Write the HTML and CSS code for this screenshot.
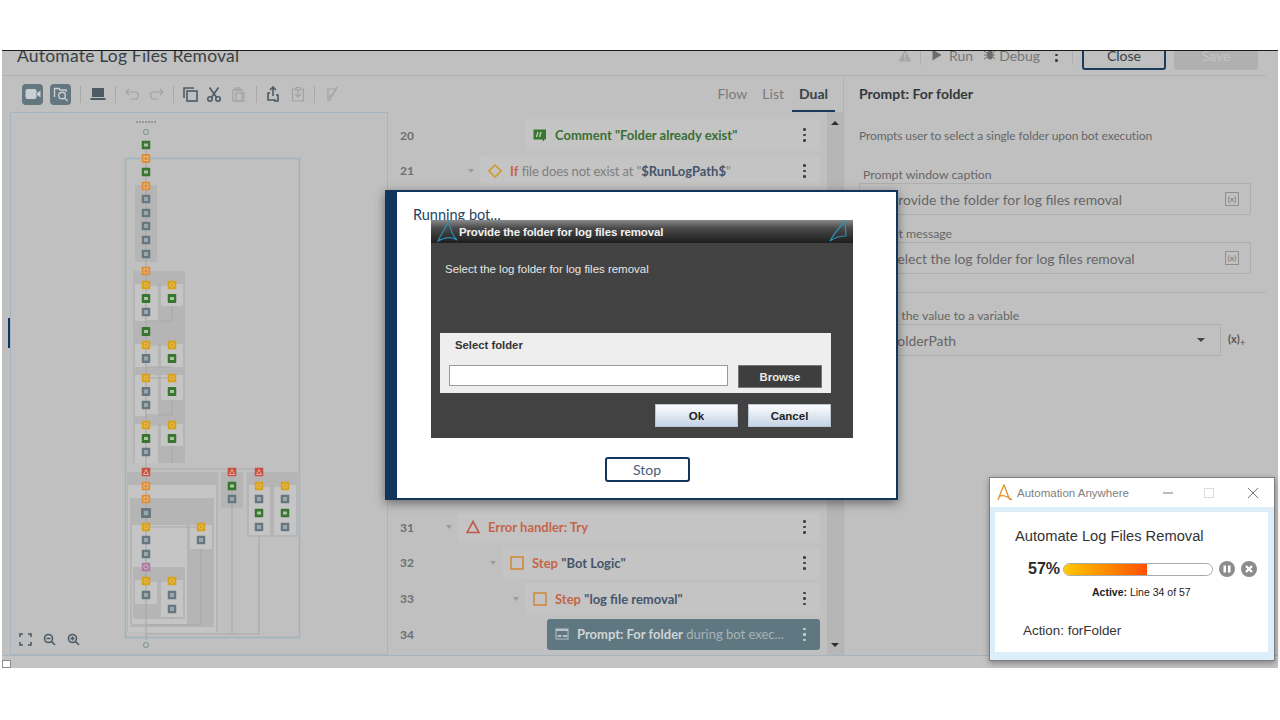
FILE: index.html
```html
<!DOCTYPE html>
<html lang="en">
<head>
<meta charset="utf-8">
<title>Automate Log Files Removal</title>
<link rel="stylesheet" href="styles.css">
</head>
<body>
<div class="screen">
  <header class="head">
    <div class="head-inner">
      <h1 class="title">Automate Log Files Removal</h1>
      <div class="head-actions">
        <svg class="ic-warn" width="14" height="13" viewBox="0 0 14 13"><path d="M7 0.5 13.5 12.5H0.5Z" class="f-mid"/><rect x="6.3" y="4" width="1.4" height="5" class="f-bg"/><rect x="6.3" y="10" width="1.4" height="1.4" class="f-bg"/></svg>
        <span class="vsep"></span>
        <svg width="10" height="12" viewBox="0 0 10 12"><path d="M0.5 0.5 9.5 6 0.5 11.5Z" class="f-dim"/></svg>
        <span class="act run">Run</span>
        <svg class="ic-bug" width="13" height="12" viewBox="0 0 13 12"><ellipse cx="7" cy="6" rx="3" ry="4.5" class="f-dim"/><path d="M1 2 4 4M1 6H4M1 10 4 8M12 2 10 4M12 6H10M12 10 10 8" class="s-dim"/></svg>
        <span class="act">Debug</span>
        <span class="kebab head-kebab"><i></i><i></i></span>
        <span class="vsep sep2"></span>
        <button class="btn-close">Close</button>
        <button class="btn-save">Save</button>
      </div>
    </div>
  </header>

  <div class="main">
    <section class="editor">
      <div class="toolbar">
        <span class="tool-btn"><svg width="16" height="12" viewBox="0 0 16 12"><rect x="0.5" y="1" width="11" height="10" rx="2" class="f-bg2"/><path d="M12 5 15.5 2.5V9.5L12 7Z" class="f-bg2"/></svg></span>
        <span class="tool-btn"><svg width="16" height="16" viewBox="0 0 16 16"><path d="M1.5 11V2.5H6L7 4H13V6" class="s-bg2"/><circle cx="9" cy="9.5" r="3.3" class="s-bg2"/><path d="M11.5 12 14.5 15" class="s-bg2"/></svg></span>
        <span class="tsep"></span>
        <svg class="tool" width="16" height="14" viewBox="0 0 16 14"><rect x="2" y="1" width="12" height="9" class="f-ink"/><rect x="0.5" y="11" width="15" height="2" class="f-ink"/></svg>
        <span class="tsep"></span>
        <svg class="tool" width="15" height="12" viewBox="0 0 15 12"><path d="M4 1 1 4 4 7M1 4H10A3.5 3.5 0 0 1 10 11H6" class="s-light"/></svg>
        <svg class="tool" width="15" height="12" viewBox="0 0 15 12"><path d="M11 1 14 4 11 7M14 4H5A3.5 3.5 0 0 0 5 11H9" class="s-light"/></svg>
        <span class="tsep"></span>
        <svg class="tool" width="15" height="15" viewBox="0 0 15 15"><path d="M1 11V1H11" class="s-ink"/><rect x="4" y="4" width="10" height="10" class="s-ink"/></svg>
        <svg class="tool" width="14" height="15" viewBox="0 0 14 15"><circle cx="3" cy="12" r="2.2" class="s-ink"/><circle cx="11" cy="12" r="2.2" class="s-ink"/><path d="M4.5 10.3 11.5 0.5M9.5 10.3 2.5 0.5" class="s-ink"/></svg>
        <svg class="tool paste" width="13" height="15" viewBox="0 0 13 15"><rect x="1" y="3" width="9" height="11" class="s-light"/><rect x="4" y="6" width="8" height="8" class="s-light"/><rect x="3" y="1" width="5" height="2" class="s-light"/></svg>
        <span class="tsep"></span>
        <svg class="tool" width="14" height="16" viewBox="0 0 14 16"><path d="M7 1V10M4 4 7 1 10 4M4 7H2V14H9V15H12V9H10" class="s-ink"/></svg>
        <svg class="tool nudge" width="14" height="16" viewBox="0 0 14 16"><path d="M7 4V11M4 8 7 11 10 8" class="s-light"/><path d="M4.500 3H1.500V15H12.500V3H9.500M5 1.500H9V4H5Z" class="s-light"/></svg>
        <span class="tsep"></span>
        <svg class="tool nudge" width="12" height="16" viewBox="0 0 12 16"><path d="M2 3H10L7 9H4V14H2ZM11 1 3 15" class="s-light"/></svg>
        <nav class="tabs">
          <span class="tab">Flow</span>
          <span class="tab">List</span>
          <span class="tab on">Dual</span>
        </nav>
      </div>

      <div class="panes">
        <div class="flow">
          <svg class="flow-svg" width="378" height="543" viewBox="10 112 378 543">
            <defs>
              <symbol id="nO" viewBox="0 0 9 9"><rect width="9" height="9" rx="1.500" class="n-orange"/><rect x="2.500" y="2.500" width="4" height="4" class="g-o"/></symbol>
              <symbol id="nY" viewBox="0 0 9 9"><rect width="9" height="9" rx="1" class="n-yellow"/><circle cx="4.500" cy="4.500" r="2" class="g-y"/></symbol>
              <symbol id="nG" viewBox="0 0 9 9"><rect width="9" height="9" rx="1" class="n-green"/><rect x="2.500" y="3" width="4" height="3" class="n-fill"/></symbol>
              <symbol id="nS" viewBox="0 0 9 9"><rect width="9" height="9" rx="1" class="n-slate"/><rect x="2.500" y="2.500" width="4" height="4" class="n-fill2"/></symbol>
              <symbol id="nR" viewBox="0 0 9 9"><rect width="9" height="9" rx="1" class="n-red"/><path d="M4.500 2 7 7H2Z" class="g-r"/></symbol>
              <symbol id="nP" viewBox="0 0 9 9"><rect width="9" height="9" rx="1" class="n-purple"/><circle cx="4.500" cy="4.500" r="2.200" class="g-r"/></symbol>
            </defs>
            <path d="M136 122H157" class="dash"/>
            <rect x="125.500" y="158.500" width="174" height="479" class="frame"/>
            <rect x="135" y="185" width="22" height="77" class="band"/>
            <rect x="133" y="271" width="52" height="192" class="band"/>
            <rect x="135" y="284" width="23" height="37" class="lite"/>
            <rect x="161" y="284" width="22" height="22" class="lite"/>
            <rect x="135" y="344" width="23" height="23" class="lite"/>
            <rect x="161" y="344" width="22" height="23" class="lite"/>
            <rect x="135" y="375" width="23" height="41" class="lite"/>
            <rect x="161" y="375" width="22" height="25" class="lite"/>
            <rect x="135" y="424" width="23" height="39" class="lite"/>
            <rect x="161" y="424" width="22" height="22" class="lite"/>
            <rect x="127" y="472" width="91" height="160" class="band"/>
            <rect x="128" y="485" width="88" height="147" class="lite"/>
            <rect x="130" y="498" width="84" height="129" class="band"/>
            <rect x="132" y="525" width="55" height="99" class="lite"/>
            <rect x="190" y="525" width="22" height="24" class="lite"/>
            <rect x="133" y="567" width="52" height="52" class="band"/>
            <rect x="135" y="580" width="22" height="24" class="lite"/>
            <rect x="161" y="580" width="22" height="37" class="lite"/>
            <rect x="221" y="472" width="22" height="36" class="band"/>
            <rect x="247" y="472" width="51" height="65" class="band"/>
            <rect x="249" y="485" width="21" height="50" class="lite"/>
            <rect x="274" y="485" width="22" height="50" class="lite"/>
            <path d="M146 150V640M146 285H172M172 306V321H146M146 345H172M172 367H146M146 378H172M172 400V415H146M146 425H172M172 446V463M146 469H259M232 472V634M259 537V634M146 634H259M146 527H201M201 549V625H146M146 581H172M259 486H285M172 617V619" class="wire"/>
            <circle cx="146" cy="132" r="2.500" class="end"/>
            <circle cx="146" cy="645" r="2.500" class="end"/>
            <use href="#nG" x="141.500" y="140.500" width="9" height="9"/>
            <use href="#nO" x="141.500" y="154" width="9" height="9"/>
            <use href="#nG" x="141.500" y="167.500" width="9" height="9"/>
            <use href="#nO" x="141.500" y="181.500" width="9" height="9"/>
            <use href="#nS" x="141.500" y="194.500" width="9" height="9"/>
            <use href="#nS" x="141.500" y="208.500" width="9" height="9"/>
            <use href="#nS" x="141.500" y="221.500" width="9" height="9"/>
            <use href="#nS" x="141.500" y="235.500" width="9" height="9"/>
            <use href="#nS" x="141.500" y="249.500" width="9" height="9"/>
            <use href="#nO" x="141.500" y="266.500" width="9" height="9"/>
            <use href="#nY" x="141.500" y="280.500" width="9" height="9"/>
            <use href="#nY" x="167.500" y="280.500" width="9" height="9"/>
            <use href="#nG" x="141.500" y="294" width="9" height="9"/>
            <use href="#nG" x="167.500" y="294" width="9" height="9"/>
            <use href="#nS" x="141.500" y="307.500" width="9" height="9"/>
            <use href="#nG" x="141.500" y="327" width="9" height="9"/>
            <use href="#nY" x="141.500" y="340.500" width="9" height="9"/>
            <use href="#nY" x="167.500" y="340.500" width="9" height="9"/>
            <use href="#nS" x="141.500" y="354" width="9" height="9"/>
            <use href="#nG" x="167.500" y="354" width="9" height="9"/>
            <use href="#nY" x="141.500" y="373.500" width="9" height="9"/>
            <use href="#nY" x="167.500" y="373.500" width="9" height="9"/>
            <use href="#nS" x="141.500" y="387" width="9" height="9"/>
            <use href="#nG" x="167.500" y="387" width="9" height="9"/>
            <use href="#nS" x="141.500" y="400.500" width="9" height="9"/>
            <use href="#nY" x="141.500" y="420.500" width="9" height="9"/>
            <use href="#nY" x="167.500" y="420.500" width="9" height="9"/>
            <use href="#nG" x="141.500" y="434" width="9" height="9"/>
            <use href="#nG" x="167.500" y="434" width="9" height="9"/>
            <use href="#nS" x="141.500" y="447.500" width="9" height="9"/>
            <use href="#nR" x="141.500" y="467.500" width="9" height="9"/>
            <use href="#nR" x="227.500" y="467.500" width="9" height="9"/>
            <use href="#nR" x="254.500" y="467.500" width="9" height="9"/>
            <use href="#nO" x="141.500" y="481.500" width="9" height="9"/>
            <use href="#nO" x="141.500" y="494.500" width="9" height="9"/>
            <use href="#nS" x="141" y="508" width="10" height="10"/>
            <use href="#nY" x="141.500" y="522.500" width="9" height="9"/>
            <use href="#nY" x="196.500" y="522.500" width="9" height="9"/>
            <use href="#nS" x="141.500" y="535.500" width="9" height="9"/>
            <use href="#nS" x="196.500" y="535.500" width="9" height="9"/>
            <use href="#nS" x="141.500" y="549.500" width="9" height="9"/>
            <use href="#nP" x="141.500" y="562.500" width="9" height="9"/>
            <use href="#nY" x="141.500" y="576.500" width="9" height="9"/>
            <use href="#nY" x="167.500" y="576.500" width="9" height="9"/>
            <use href="#nS" x="141.500" y="590.500" width="9" height="9"/>
            <use href="#nS" x="167.500" y="590.500" width="9" height="9"/>
            <use href="#nS" x="167.500" y="604.500" width="9" height="9"/>
            <use href="#nG" x="227.500" y="481.500" width="9" height="9"/>
            <use href="#nS" x="227.500" y="494.500" width="9" height="9"/>
            <use href="#nY" x="254.500" y="481.500" width="9" height="9"/>
            <use href="#nY" x="280.500" y="481.500" width="9" height="9"/>
            <use href="#nS" x="254.500" y="494.500" width="9" height="9"/>
            <use href="#nS" x="280.500" y="494.500" width="9" height="9"/>
            <use href="#nG" x="254.500" y="508.500" width="9" height="9"/>
            <use href="#nG" x="280.500" y="508.500" width="9" height="9"/>
            <use href="#nS" x="254.500" y="522.500" width="9" height="9"/>
            <use href="#nS" x="280.500" y="522.500" width="9" height="9"/>
          </svg>
          <div class="zoom-tools">
            <svg width="13" height="13" viewBox="0 0 13 13"><path d="M1 4V1H4M9 1H12V4M12 9V12H9M4 12H1V9" class="s-ink"/></svg>
            <svg width="13" height="13" viewBox="0 0 13 13"><circle cx="5.500" cy="5.500" r="4" class="s-ink"/><path d="M8.500 8.500 12 12M3.500 5.500H7.500" class="s-ink"/></svg>
            <svg width="13" height="13" viewBox="0 0 13 13"><circle cx="5.500" cy="5.500" r="4" class="s-ink"/><path d="M8.500 8.500 12 12M3.500 5.500H7.500M5.500 3.500V7.500" class="s-ink"/></svg>
          </div>
        </div>

        <div class="list">
          <div class="rows">
            <div class="line"><span class="num">20</span><div class="row w295"><svg class="ri" width="14" height="13" viewBox="0 0 14 13"><path d="M0.500 0.500H13V10.500H11V12.500L9 10.500H0.500Z" class="f-green"/><path d="M5 3 3.500 8M8 3 6.500 8" class="s-bg3"/></svg><span class="rt t-green"><b>Comment "Folder already exist"</b></span><span class="kebab"><i></i><i></i></span></div></div>
            <div class="line"><span class="num">21</span><span class="caret"></span><div class="row w340"><svg class="ri" width="14" height="14" viewBox="0 0 14 14"><path d="M7 1 13 7 7 13 1 7Z" class="s-amber"/></svg><span class="rt"><b class="t-orange">If</b> <span class="t-grey">file does not exist at "</span><b class="t-navy">$RunLogPath$</b><span class="t-grey">"</span></span><span class="kebab"><i></i><i></i></span></div></div>
            <div class="rows-hidden"></div>
            <div class="line"><span class="num">31</span><span class="caret"></span><div class="row w362"><svg class="ri" width="14" height="14" viewBox="0 0 14 14"><path d="M7 1.500 13 12.500H1Z" class="s-red"/></svg><span class="rt"><b class="t-orange">Error handler: Try</b></span><span class="kebab"><i></i><i></i></span></div></div>
            <div class="line"><span class="num">32</span><span class="caret"></span><div class="row w318"><svg class="ri" width="14" height="14" viewBox="0 0 14 14"><rect x="1" y="1" width="12" height="12" class="s-step"/></svg><span class="rt"><b class="t-orange">Step</b> <b class="t-navy">"Bot Logic"</b></span><span class="kebab"><i></i><i></i></span></div></div>
            <div class="line"><span class="num">33</span><span class="caret"></span><div class="row w295"><svg class="ri" width="14" height="14" viewBox="0 0 14 14"><rect x="1" y="1" width="12" height="12" class="s-step"/></svg><span class="rt"><b class="t-orange">Step</b> <b class="t-navy">"log file removal"</b></span><span class="kebab"><i></i><i></i></span></div></div>
            <div class="line"><span class="num">34</span><div class="row w273 sel"><svg class="ri" width="14" height="12" viewBox="0 0 14 12"><rect x="0.500" y="0.500" width="13" height="11" class="f-sel"/><rect x="1.500" y="3" width="11" height="7.500" class="f-selbg"/><rect x="2.500" y="7" width="4" height="2" class="f-sel"/><rect x="8" y="7" width="4" height="2" class="f-sel"/></svg><span class="rt"><b>Prompt: For folder</b> <span class="t-selgrey">during bot exec...</span></span><span class="kebab"><i></i><i></i></span></div></div>
          </div>
          <div class="scroll"><span class="arr up"></span><span class="arr down"></span></div>
        </div>
      </div>
    </section>

    <aside class="props">
      <h2 class="p-title">Prompt: For folder</h2>
      <p class="p-desc">Prompts user to select a single folder upon bot execution</p>
      <label class="p-label">Prompt window caption</label>
      <div class="field"><span class="val">Provide the folder for log files removal</span><span class="xbox">(x)</span></div>
      <label class="p-label lab2">Prompt message</label>
      <div class="field"><span class="val">Select the log folder for log files removal</span><span class="xbox">(x)</span></div>
      <hr class="p-rule">
      <label class="p-label lab3">Assign the value to a variable</label>
      <div class="sel-row">
        <div class="field select"><span class="val">FolderPath</span><span class="sel-caret"></span></div>
        <span class="xplus">(x)<sub>+</sub></span>
      </div>
    </aside>
  </div>
  <footer class="foot"></footer>
  <span class="handle"></span>
</div>
<span class="corner"></span>

<div class="modal">
  <div class="modal-strip"></div>
  <div class="modal-body">
    <div class="running">Running bot...</div>
    <div class="dialog">
      <div class="dlg-title">
        <svg class="sail" width="22" height="22" viewBox="0 0 22 22"><path d="M1 21C4 15 8 8 12 1 13 8 15 15 20 20 14 16 8 17 1 21Z" class="s-cyan"/></svg>
        <span>Provide the folder for log files removal</span>
        <svg class="sail right" width="22" height="22" viewBox="0 0 22 22"><path d="M1 21C4 15 10 8 16 1 16 8 17 13 17 16 11 16 6 17 1 21Z" class="s-cyan"/></svg>
      </div>
      <p class="dlg-msg">Select the log folder for log files removal</p>
      <div class="dlg-panel">
        <div class="dlg-panel-title">Select folder</div>
        <div class="dlg-input-row">
          <div class="dlg-input"></div>
          <button class="dlg-browse">Browse</button>
        </div>
      </div>
      <div class="dlg-actions">
        <button class="dlg-btn">Ok</button>
        <button class="dlg-btn">Cancel</button>
      </div>
    </div>
    <button class="stop">Stop</button>
  </div>
</div>

<div class="progress-win">
  <div class="pw-bar">
    <svg width="16" height="18" viewBox="0 0 16 18"><path d="M1 16C3 11 5 5 7 1 9 6 11 12 13 16M3 12C6 11 10 12 15 16" class="s-logo"/></svg>
    <span class="pw-name">Automation Anywhere</span>
    <svg class="pw-ctl" width="12" height="12" viewBox="0 0 12 12"><path d="M1 6H11" class="s-ctl"/></svg>
    <svg class="pw-ctl" width="12" height="12" viewBox="0 0 12 12"><rect x="1.500" y="1.500" width="9" height="9" class="s-ctl2"/></svg>
    <svg class="pw-ctl" width="12" height="12" viewBox="0 0 12 12"><path d="M1 1 11 11M11 1 1 11" class="s-ctl"/></svg>
  </div>
  <div class="pw-body">
    <div class="pw-title">Automate Log Files Removal</div>
    <div class="pw-progress">
      <b class="pw-pct">57%</b>
      <div class="pw-track"><div class="pw-fill"></div></div>
      <span class="pw-round"><svg width="16" height="16" viewBox="0 0 16 16"><circle cx="8" cy="8" r="8" class="f-round"/><rect x="4.500" y="4.500" width="2.500" height="7" class="f-white"/><rect x="9" y="4.500" width="2.500" height="7" class="f-white"/></svg></span>
      <span class="pw-round"><svg width="16" height="16" viewBox="0 0 16 16"><circle cx="8" cy="8" r="8" class="f-round"/><path d="M5 5 11 11M11 5 5 11" class="s-white"/></svg></span>
    </div>
    <div class="pw-active"><b>Active:</b> Line 34 of 57</div>
    <div class="pw-action">Action: forFolder</div>
  </div>
</div>
</body>
</html>
```
FILE: styles.css
```css
* { box-sizing: border-box; }
html, body { margin: 0; height: 720px; overflow: hidden; background: #fff; }
body { font-family: Lato, "Open Sans", sans-serif; color: #3f4a52; }
svg { display: block; flex: none; }

.screen { position: absolute; left: 2px; top: 50px; width: 1276px; height: 618px; background: #c0c0c0; border-top: 1.5px solid #1b1b1b; display: flex; flex-direction: column; overflow: hidden; }
.corner { position: absolute; left: 2px; top: 660px; width: 9px; height: 8px; background: #fff; border: 1px solid #8a8a8a; }
.handle { position: absolute; left: 6px; top: 267px; width: 2px; height: 30px; background: #12355b; }

.head { height: 25px; flex: none; overflow: hidden; border-bottom: 1px solid #b2b2b2; margin-right: 12px; }
.head-inner { height: 36px; margin-top: -14px; display: flex; align-items: center; padding-left: 15px; }
.title { margin: 0; font-size: 17.5px; font-weight: 400; color: #3a3f44; letter-spacing: 0.2px; white-space: nowrap; }
.head-actions { margin-left: auto; display: flex; align-items: center; height: 36px; padding-right: 8px; }
.vsep { width: 1px; height: 20px; background: #b0b0b0; margin: 0 11px 0 8px; }
.sep2 { margin: 0 9px 0 14px; }
.act { font-size: 14px; color: #777; margin-left: 5px; }
.act.run { margin-left: 7px; margin-right: 10px; }
.ic-bug { margin-right: -2px; }
.head-kebab { margin-left: 15px; }
.btn-close { width: 84px; height: 30px; border: 2px solid #1b3a5c; border-radius: 3px; background: transparent; font: 14px Lato, sans-serif; color: #3a3f44; padding: 0; }
.btn-save { width: 84px; height: 30px; margin-left: 8px; border: 0; border-radius: 3px; background: #b0b0b0; color: #c4c4c4; font: 14px Lato, sans-serif; padding: 0; }

.main { flex: none; height: 579px; display: flex; min-height: 0; }
.editor { width: 842px; flex: none; display: flex; flex-direction: column; border-right: 1px solid #adb3b8; }
.toolbar { height: 36px; flex: none; display: flex; align-items: center; padding-left: 20px; }
.tool-btn { width: 21px; height: 21px; border-radius: 4px; background: #62777f; display: flex; align-items: center; justify-content: center; margin-right: 7px; flex: none; }
.tool-btn + .tool-btn { margin-right: 9px; }
.tsep { width: 1px; height: 17px; background: #a8a8a8; margin-right: 9px; flex: none; }
.tool { margin-right: 9px; }
.tool.paste { margin-left: 2px; margin-right: 11px; }
.tool.nudge { margin-left: 2px; }
.tabs { margin-left: auto; display: flex; height: 100%; padding-right: 8px; }
.tab { padding: 0 7px; margin-left: 1px; font-size: 14px; color: #7b7b7b; display: flex; align-items: center; height: 36px; border-bottom: 2px solid transparent; }
.tab.on { font-weight: 700; color: #3a424a; border-bottom-color: #1b3a5c; }

.panes { flex: 1; display: flex; min-height: 0; height: 543px; }
.flow { margin-left: 8px; width: 378px; height: 543px; flex: none; position: relative; box-shadow: inset 0 0 0 1px #a6b5c1; }
.zoom-tools { position: absolute; left: 9px; bottom: 9px; display: flex; gap: 11px; }
.list { flex: 1; display: flex; min-width: 0; height: 543px; }
.rows { flex: 1; padding-top: 7px; display: flex; flex-direction: column; gap: 3.75px; padding-right: 7px; }
.rows-hidden { height: 316.75px; flex: none; }
.line { height: 32px; display: flex; align-items: center; flex: none; }
.num { font-size: 12px; font-weight: 700; color: #6a6f73; margin-left: 12px; width: 30px; flex: none; }
.caret { margin-left: auto; margin-right: 6px; width: 0; height: 0; border: 3.5px solid transparent; border-top: 4px solid #9a9a9a; border-bottom: 0; flex: none; }
.row { height: 32px; background: #c4c4c4; border-radius: 2px; display: flex; align-items: center; padding: 0 14px 0 8px; flex: none; font-size: 13px; }
.num + .row { margin-left: auto; }
.w295 { width: 295px; }
.w340 { width: 340px; }
.w362 { width: 362px; }
.w318 { width: 318px; }
.w273 { width: 273px; }
.ri { margin-right: 8px; }
.rt { flex: 1; white-space: nowrap; overflow: hidden; }
.rt b { font-weight: 700; }
.t-green { color: #3a6f33; }
.t-orange { color: #c4654a; }
.t-navy { color: #45556a; }
.t-grey { color: #7f7f7f; letter-spacing: -0.15px; }
.t-selgrey { color: #a9b3b7; }
.sel { background: #5f7780; color: #cfd4d6; height: 31px; border-radius: 3px; }
.kebab { display: flex; flex-direction: column; gap: 3px; width: 3px; flex: none; position: relative; }
.kebab i, .kebab::before { content: ""; display: block; width: 2.5px; height: 2.5px; background: #3a3f44; border-radius: 50%; }
.sel .kebab i, .sel .kebab::before { background: #c8d0d3; }
.scroll { width: 16px; flex: none; background: #b6b6b6; display: flex; flex-direction: column; justify-content: space-between; align-items: center; padding: 9px 0 8px; }
.arr { width: 0; height: 0; border: 4px solid transparent; }
.arr.up { border-top: 0; border-bottom: 4px solid #2e2e2e; }
.arr.down { border-bottom: 0; border-top: 4px solid #2e2e2e; }

.props { flex: 1; padding: 0 27px 0 15px; position: relative; }
.p-title { margin: 9px 0 0; font-size: 14px; font-weight: 700; color: #33383c; line-height: 18px; }
.p-desc { margin: 25px 0 0; font-size: 12px; letter-spacing: -0.1px; color: #666; line-height: 16px; }
.p-label { display: block; margin: 23px 0 0 4px; font-size: 12.3px; color: #666; line-height: 16px; }
.lab2 { margin-top: 11px; }
.lab3 { margin-top: 15px; }
.field { height: 32px; border: 1px solid #aeaeae; border-radius: 1px; display: flex; align-items: center; padding: 0 11px 0 30px; font-size: 13.9px; color: #666; }
.val { flex: 1; white-space: nowrap; }
.xbox { width: 14px; height: 14px; border: 1px solid #8f8f8f; font-size: 8px; display: flex; align-items: center; justify-content: center; color: #777; }
.p-rule { border: 0; border-top: 1px solid #b2b2b2; margin: 18px -15px 0 -15px; }
.sel-row { display: flex; align-items: center; margin-right: -15px; }
.select { width: 362px; flex: none; padding-right: 15px; }
.sel-caret { width: 0; height: 0; border: 4px solid transparent; border-top: 4px solid #444; border-bottom: 0; }
.xplus { margin-left: 7px; font-size: 11px; color: #555; font-weight: 700; }
.xplus sub { font-weight: 400; font-size: 10px; }
.foot { flex: 1; background: #c4c4c4; border-top: 1px solid #a8b4bd; }

.modal { position: absolute; left: 385px; top: 190px; width: 513px; height: 310px; background: #fff; border: 2px solid #12355b; border-left: 0; display: flex; box-shadow: 0 3px 10px rgba(0, 0, 0, .45); }
.modal-strip { width: 12px; flex: none; background: #12355b; }
.modal-body { flex: 1; display: flex; flex-direction: column; }
.running { height: 28px; padding: 15px 0 0 16px; font-size: 14.5px; line-height: 16px; color: #1d4468; white-space: nowrap; }
.dialog { position: relative; margin-left: 34px; width: 422px; height: 218px; background: #424242; font-family: "Liberation Sans", Arial, sans-serif; }
.dlg-title { height: 23px; background: linear-gradient(#8a8a8a, #4a4a4a 35%, #1e1e1e); display: flex; align-items: center; padding-left: 28px; color: #f2f2f2; font-size: 11.5px; letter-spacing: -0.15px; font-weight: 700; position: relative; }
.sail { position: absolute; left: 6px; top: 0; }
.sail.right { left: auto; right: 2px; }
.dlg-msg { margin: 19px 0 0 14px; font-size: 11.5px; letter-spacing: -0.02px; line-height: 14px; color: #e6e6e6; }
.dlg-panel { margin: 57px 0 0 9px; width: 391px; height: 60px; background: #eee; padding: 5px 9px 0; }
.dlg-panel-title { margin-left: 6px; font-size: 11.3px; line-height: 14px; font-weight: 700; color: #333; }
.dlg-input-row { display: flex; margin-top: 13px; gap: 10px; }
.dlg-input { width: 279px; height: 21px; background: #fff; border: 1px solid #9a9a9a; }
.dlg-browse { width: 84px; height: 23px; background: #3e3e3e; border: 1px solid #777; color: #e8e8e8; font: 700 11.3px "Liberation Sans", Arial, sans-serif; padding: 0; }
.dlg-actions { display: flex; justify-content: flex-end; gap: 10px; margin: 11px 22px 0 0; }
.dlg-btn { width: 83px; height: 23px; border: 1px solid #b8c4d0; background: linear-gradient(#fdfdfe, #c4d4e6); color: #222; font: 700 11.5px "Liberation Sans", Arial, sans-serif; padding: 0; }
.stop { align-self: center; margin: 19px 0 0 1px; width: 85px; height: 25px; background: #fff; border: 2px solid #12355b; border-radius: 3px; color: #44607c; font: 14px Lato, sans-serif; padding: 0; }

.progress-win { position: absolute; left: 989px; top: 477px; width: 286px; height: 184px; background: #ddeefb; border: 1px solid #7d7d7d; box-shadow: 0 2px 6px rgba(0, 0, 0, .35); font-family: "Liberation Sans", Arial, sans-serif; }
.pw-bar { height: 29px; background: #fff; display: flex; align-items: center; padding-left: 7px; }
.pw-name { font-size: 11.5px; color: #808080; margin-left: 4px; width: 145px; }
.pw-ctl { margin-right: 29px; }
.pw-ctl:last-child { margin-right: 0; margin-left: 3px; }
.pw-body { margin: 5px 6px 0 5px; height: 140px; background: #fff; padding: 15px 0 0 20px; }
.pw-title { font-size: 14.7px; line-height: 18px; color: #333; }
.pw-progress { display: flex; align-items: center; margin: 15px 0 0 13px; gap: 7px; }
.pw-pct { font-size: 16px; color: #2b2b2b; width: 28px; }
.pw-track { width: 150px; height: 13px; border: 1px solid #aaa; border-radius: 7px; overflow: hidden; background: #fff; }
.pw-fill { width: 56%; height: 100%; background: linear-gradient(90deg, #ffc800, #ff5000); }
.pw-round { margin-left: -1px; }
.pw-active { margin: 7px 0 0 77px; font-size: 10.5px; line-height: 14px; color: #222; }
.pw-action { margin: 24px 0 0 8px; font-size: 13.4px; line-height: 16px; color: #333; }

.f-mid { fill: #a5a5a5; }
.f-bg { fill: #c0c0c0; }
.f-bg2 { fill: #c9cfd2; }
.f-dim { fill: #6d6d6d; }
.s-dim { stroke: #6d6d6d; fill: none; }
.s-bg2 { stroke: #c9cfd2; stroke-width: 1.4; fill: none; }
.s-bg3 { stroke: #c9d8c6; stroke-width: 1.2; fill: none; }
.f-ink { fill: #4c5a63; }
.s-ink { stroke: #4c5a63; stroke-width: 1.6; fill: none; }
.s-light { stroke: #a2a2a2; stroke-width: 1.2; fill: none; }
.f-green { fill: #37772f; }
.s-amber { stroke: #d29a2c; stroke-width: 1.6; fill: none; }
.s-red { stroke: #c05a48; stroke-width: 1.6; fill: none; }
.s-step { stroke: #d08a3c; stroke-width: 1.6; fill: none; }
.f-sel { fill: #b9c3c7; }
.f-selbg { fill: #5f7780; }
.s-cyan { stroke: #2d8fb3; stroke-width: 1.2; fill: none; }
.s-logo { stroke: #e8912c; stroke-width: 1.4; fill: none; }
.s-ctl { stroke: #777; stroke-width: 1; fill: none; }
.s-ctl2 { stroke: #ddd; stroke-width: 1; fill: none; }
.f-round { fill: #8c8c8c; }
.f-white { fill: #fff; }
.s-white { stroke: #fff; stroke-width: 2.4; fill: none; }

.dash { stroke: #8f9a9f; stroke-width: 2; stroke-dasharray: 2 1; fill: none; }
.frame { fill: none; stroke: #9fb2c0; stroke-width: 1.500; }
.band { fill: #b5b5b5; }
.lite { fill: #c5c5c5; }
.wire { fill: none; stroke: #a9a9a9; stroke-width: 1.200; }
.end { fill: #c0c0c0; stroke: #8b979d; stroke-width: 1.200; }
.n-orange { fill: #dd8d3a; }
.n-yellow { fill: #d9a21e; }
.n-green { fill: #38752f; }
.n-slate { fill: #667780; }
.n-red { fill: #c8503f; }
.n-purple { fill: #a77ba6; }
.g-o { fill: none; stroke: #eec08a; stroke-width: 0.800; }
.g-y { fill: none; stroke: #eac766; stroke-width: 0.800; }
.g-r { fill: none; stroke: #ecc4bc; stroke-width: 0.800; }
.n-fill { fill: #a8c4a3; }
.n-fill2 { fill: #9aa7ad; }
```
